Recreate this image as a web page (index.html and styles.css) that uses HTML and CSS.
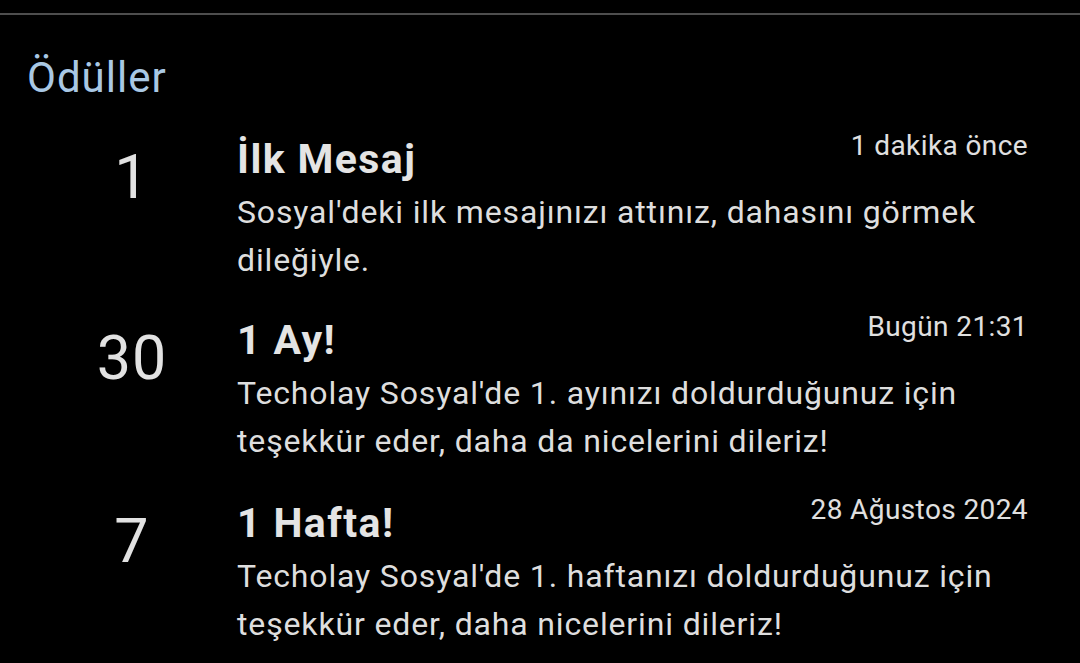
FILE: index.html
```html
<!DOCTYPE html>
<html lang="tr">
<head>
<meta charset="UTF-8" />
<meta name="viewport" content="width=device-width, initial-scale=1" />
<title>Ödüller</title>
<link rel="stylesheet" href="styles.css">
</head>
<body>
  <div class="topline"></div>

  <div class="awards">
    <h2>Ödüller</h2>

    <div class="award">
      <div class="num">1</div>
      <div class="info">
        <div class="head">
          <h3>İlk Mesaj</h3>
          <span class="date">1 dakika önce</span>
        </div>
        <p>Sosyal'deki ilk mesajınızı attınız, dahasını görmek dileğiyle.</p>
      </div>
    </div>

    <div class="award">
      <div class="num">30</div>
      <div class="info">
        <div class="head">
          <h3>1 Ay!</h3>
          <span class="date">Bugün 21:31</span>
        </div>
        <p>Techolay Sosyal'de 1. ayınızı doldurduğunuz için teşekkür eder, daha da nicelerini dileriz!</p>
      </div>
    </div>

    <div class="award">
      <div class="num">7</div>
      <div class="info">
        <div class="head">
          <h3>1 Hafta!</h3>
          <span class="date">28 Ağustos 2024</span>
        </div>
        <p>Techolay Sosyal'de 1. haftanızı doldurduğunuz için teşekkür eder, daha nicelerini dileriz!</p>
      </div>
    </div>
  </div>
</body>
</html>
```

FILE: styles.css
```css
body { margin: 0; background: #000; color: #e3e3e3; font-family: Roboto, "Noto Sans", sans-serif; overflow: hidden; }
.topline { margin-top: 13px; height: 2px; background: #4e4e4e; }
.awards { padding: 0 52px 0 27px; }
h2 { margin: 38px 0 0; font-size: 42px; line-height: 50px; font-weight: 400; letter-spacing: 1px; color: #a9c8e4; }
.award { display: grid; grid-template-columns: 210px 1fr; margin-top: 32px; }
.award:last-child { margin-top: 34px; }
.num { text-align: center; font-size: 61px; line-height: 60px; margin-top: 12px; letter-spacing: 1px; color: #e2e2e2; }
.head { display: flex; justify-content: space-between; align-items: flex-start; }
h3 { margin: 0; font-size: 41px; line-height: 48px; font-weight: 700; letter-spacing: 1.4px; color: #e4e4e4; }
.date { font-size: 28px; line-height: 34px; margin-top: -6px; letter-spacing: 0.4px; color: #e0e0e0; }
p { margin: 5px 0 0; font-size: 32px; line-height: 48px; letter-spacing: 0.85px; color: #dedede; }
```
